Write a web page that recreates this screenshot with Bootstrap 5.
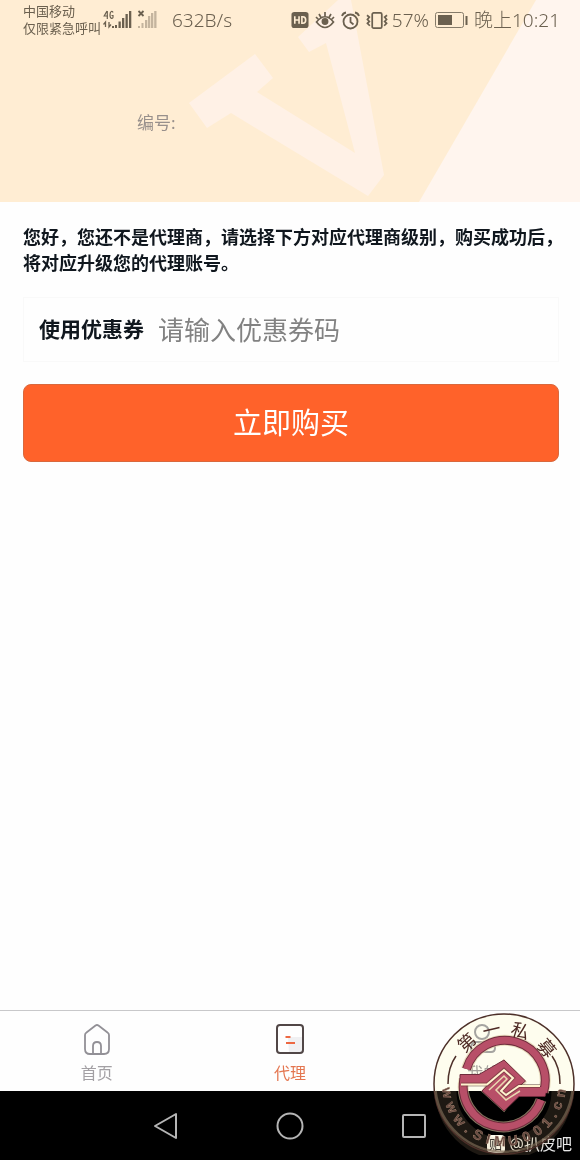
<!DOCTYPE html>
<html lang="zh-CN">
<head>
<meta charset="utf-8">
<meta name="viewport" content="width=device-width, initial-scale=1">
<title>代理</title>
<link href="https://cdn.jsdelivr.net/npm/bootstrap@5.3.0/dist/css/bootstrap.min.css" rel="stylesheet">
<style>
body{font-family:"Noto Sans","Noto Sans CJK SC",sans-serif;background:#fefefe;color:#10171e}
.hero{background:#ffedd3;height:202px}
.hero-art{z-index:0;inset:0;width:100%;height:100%}
.statusbar{height:40px;padding:0 20px 0 23px;color:#6b604f;font-size:19px;font-weight:300;line-height:24px}
.carrier{font-size:13px;line-height:17px;font-weight:400;width:80px}
.speed{margin-left:15px}
.icons{gap:6px}
.icons svg,.signal{flex:none}
.serial{margin:70px 0 0 137px;font-size:17px;line-height:26px;color:#98908c}
.page-main{padding:22px 21px 0 23px}
.notice{font-size:18px;line-height:26px;font-weight:700;margin:0 -12px 21px 0}
.coupon{height:65px;border:1px solid #f9f9f9;padding:0 15px}
.coupon label{font-size:21px;font-weight:700}
.coupon input{font-size:26px;line-height:36px;padding:0;margin-left:14px;min-width:0}
.coupon input::placeholder{color:#828282;opacity:1}
.buy{margin-top:22px;height:78px;background:#ff622a;border:1px solid #d9683d;border-radius:8px;color:#fff;font-size:29px}
.tabs{border-top:1px solid #c8c8ca;height:81px;background:#fefefe}
.tabs a{color:#a3a0a4;font-size:16px;line-height:22px;padding-top:12px;gap:7px}
.tabs a.active{color:#e47650}
.sysbar{height:69px;background:#000;padding:0 153px}
.sysbar button{line-height:0}
.source{right:8px;bottom:4px;color:#e8e8e8;font-size:16px;line-height:24px;gap:5px}
.tieba{width:18px;height:18px;border-radius:4px;background:#fff;color:#222;font-size:13px;line-height:18px}
.seal{right:5px;bottom:5px;pointer-events:none}
.seal .cream{mix-blend-mode:multiply}
.seal text{text-anchor:middle}
</style>
</head>
<body>
<div class="min-vh-100 d-flex flex-column position-relative">
<header class="hero position-relative">
  <svg class="hero-art position-absolute" viewBox="0 0 580 202" preserveAspectRatio="none" aria-hidden="true">
    <path d="M536 0H580V202H419Z" fill="#fff5ee"/>
    <path d="M189 103 255 54 273 78 257 92 355 153 326 43 309 52 298 37 338 0H351L384 175 368 196 231 113 207 128Z" fill="#fff1e6"/>
  </svg>
  <div class="statusbar d-flex align-items-center position-relative">
    <div class="carrier text-nowrap">中国移动<br>仅限紧急呼叫</div>
    <svg class="signal" width="54" height="22" viewBox="0 0 54 22" fill="#6b604f" aria-hidden="true">
      <path d="M4 2 1.200 7H5M4.300 2V10M10 3.500Q9.500 2 8.300 2.500 7 3 7 6T8.500 9.300 10 8V6.500H8.500" fill="none" stroke="#6b604f" stroke-width="1.200"/>
      <path d="M2.500 18V13L.5 15.500M6 13v5l2-2.500" fill="none" stroke="#6b604f" stroke-width="1.300"/>
      <path d="M9 17h2v2H9zM12 16h2v3h-2zM15.500 12.500h2.300V19h-2.300zM19 9h2.300v10H19zM22.500 5h2.300v14h-2.300zM26 2h2.300v17H26z"/>
      <path d="m35.500 2 5 5m0-5-5 5" stroke="#6b604f" stroke-width="1.800"/>
      <path opacity=".4" d="M35 17h2v2h-2zM38.500 14h2v5h-2zM42 11h2.300v8H42zM45 7h2.300v12H45zM48 4h2.300v15H48zM51.200 2h2.300v17h-2.300z"/>
    </svg>
    <span class="speed">632B/s</span>
    <div class="icons d-flex align-items-center ms-auto">
      <svg width="18" height="18" viewBox="0 0 19 18" aria-hidden="true"><rect x=".5" y=".5" width="18" height="17" rx="3" fill="#6b604f"/><path d="M4 5v8M8.500 5v8M4 9h4.500M11.500 5.500v7h1q3 0 3-3.500t-3-3.500z" fill="none" stroke="#ffedd3" stroke-width="1.700"/></svg>
      <svg width="20" height="19" viewBox="0 0 20 19" fill="none" stroke="#6b604f" stroke-width="1.700" aria-hidden="true"><path d="M1.500 11Q10 .5 18.500 11 10 22 1.500 11ZM10 1v4.500M4 3l2 3.500M16 3l-2 3.500M1 6l2.500 2.500M19 6l-2.500 2.500"/><circle cx="10" cy="10.500" r="2.600" fill="#6b604f"/></svg>
      <svg width="19" height="19" viewBox="0 0 19 19" fill="none" stroke="#6b604f" stroke-width="1.800" aria-hidden="true"><circle cx="9.500" cy="10.500" r="7"/><path d="M9.500 6v5l3 2.500M1 5Q2 2 5 1.500M18 5Q17 2 14 1.500"/></svg>
      <div class="d-flex align-items-center gap-1"><svg width="22" height="19" viewBox="0 0 23 19" fill="none" stroke="#6b604f" stroke-width="1.800" aria-hidden="true"><rect x="6.500" y="1.500" width="10" height="16" rx="1.500"/><path d="m1 4 2.500 2L1.500 8.500l2 2-2 2L4 15M22 4l-2.500 2 2 2.500-2 2 2 2L19 15"/></svg><span>57%</span></div>
      <svg width="33" height="16" viewBox="0 0 33 16" aria-hidden="true"><rect x=".5" y=".5" width="28" height="15" rx="2" fill="none" stroke="#857b69"/><path d="M3 3h14v10H3zM30.500 4h2v9h-2z" fill="#6b604f"/></svg>
      <span>晚上10:21</span>
    </div>
  </div>
  <div class="serial position-relative">编号:</div>
</header>

<main class="page-main flex-grow-1">
  <p class="notice">您好，您还不是代理商，请选择下方对应代理商级别，购买成功后，将对应升级您的代理账号。</p>
  <form>
    <div class="coupon d-flex align-items-center">
      <label for="coupon" class="text-nowrap">使用优惠券</label>
      <input id="coupon" type="text" class="border-0 bg-transparent flex-grow-1" placeholder="请输入优惠券码">
    </div>
    <button type="button" class="buy w-100">立即购买</button>
  </form>
</main>

<nav class="tabs d-flex">
  <a href="#" class="flex-fill w-100 d-flex flex-column align-items-center text-decoration-none">
    <svg width="28" height="32" viewBox="0 0 28 32" fill="none" stroke="#929096" stroke-width="1.800" aria-hidden="true"><path d="M2 12Q2 10.500 3.500 9.500L12.500 2.500Q14 1.500 15.500 2.500L24.500 9.500Q26 10.500 26 12V26Q26 31 21 31H7Q2 31 2 26ZM10 31V23Q10 19 14 19T18 23V31"/></svg>首页</a>
  <a href="#" class="active flex-fill w-100 d-flex flex-column align-items-center text-decoration-none" aria-current="page">
    <svg width="28" height="32" viewBox="0 0 28 32" aria-hidden="true"><path d="M12 14h14v16H13z" fill="#f0f0f2"/><rect x="1" y="2" width="26" height="28" rx="3" fill="none" stroke="#514747" stroke-width="2"/><path d="M9.500 14h5M10 20h9" stroke="#ed6842" stroke-width="2"/></svg>代理</a>
  <a href="#" class="flex-fill w-100 d-flex flex-column align-items-center text-decoration-none">
    <svg width="28" height="32" viewBox="0 0 28 32" fill="none" stroke="#a5a5ab" stroke-width="2" aria-hidden="true"><circle cx="13" cy="9" r="7"/><path d="M5 19H22Q26 21 26 25 26 29 22 29H6Q2 29 2 25 2 21 5 19"/></svg>我的</a>
</nav>
<footer class="sysbar d-flex justify-content-between align-items-center">
  <button type="button" class="border-0 bg-transparent p-0" aria-label="返回"><svg width="26" height="28" viewBox="0 0 26 28"><path d="M23 2V26L2 14Z" fill="none" stroke="#b5b5b5" stroke-width="2" stroke-linejoin="round"/></svg></button>
  <button type="button" class="border-0 bg-transparent p-0" aria-label="主屏幕"><svg width="28" height="28" viewBox="0 0 28 28"><circle cx="14" cy="14" r="12.500" fill="none" stroke="#b5b5b5" stroke-width="2"/></svg></button>
  <button type="button" class="border-0 bg-transparent p-0" aria-label="最近任务"><svg width="26" height="26" viewBox="0 0 26 26"><rect x="2" y="2" width="22" height="22" rx="1" fill="none" stroke="#b5b5b5" stroke-width="2"/></svg></button>
</footer>

<div class="source position-absolute d-flex align-items-center"><span class="tieba text-center">贴</span><span>@扒皮吧</span></div>
<svg class="seal position-absolute" width="142" height="142" viewBox="0 0 142 142" aria-hidden="true">
  <circle class="cream" cx="71" cy="71" r="70" fill="#fffeef"/>
  <path d="M13 78A58 58 0 0 0 129 78" fill="none" stroke="#b89c78" stroke-width="21" opacity=".16"/>
  <circle cx="71" cy="71" r="70" fill="none" stroke="#4d3029" stroke-width="1.500"/>
  <path d="M2.500 78A69 69 0 0 0 139.500 78" fill="none" stroke="#796653" stroke-width="2.500" opacity=".7"/>
  <path d="M15 71Q15 54 23 43M127 71Q127 54 119 43" fill="none" stroke="#4d3029" stroke-width="1.500"/>
  <g fill="none" stroke="#dcc9a0" stroke-width="11" opacity=".6">
    <path d="M33.500 56A40 40 0 1 1 110.500 79M31 66A40 40 0 0 0 108 87"/>
    <path d="M71 48 92 69 71 97 50 78Z" stroke-width="3"/>
  </g>
  <g fill="none" stroke="#6f2c3c" stroke-width="9">
    <path d="M33.500 56A40 40 0 1 1 110.500 79M31 66A40 40 0 0 0 108 87"/>
  </g>
  <path d="M27 61.500H46L71 47 92.500 68 86 73.500H115L112 83.500H86L71 98 49 78 55 71.500H27Z" fill="#b84f68" stroke="#6f2c3c"/>
  <g fill="none" stroke="#b84f68" stroke-width="7">
    <path d="M33.500 56A40 40 0 1 1 110.500 79M31 66A40 40 0 0 0 108 87"/>
  </g>
  <path d="M28 71.500H54L71 57 80 65 68 78 73 82 86 73H107" fill="none" stroke="#4d3029" stroke-width="4" opacity=".45"/>
  <path d="M28 71.500H54L71 57 80 65 68 78 73 82 86 73H107" fill="none" stroke="#fff3cf" stroke-width="2"/>
  <path d="M56 77 71 63 74 66 63 77 73 87 87 78" fill="none" stroke="#ead9b0" stroke-width="1.500"/>
  <g fill="#4d2924" font-size="18">
    <text x="71" y="22" transform="rotate(-42 71 71)">第</text>
    <text x="71" y="22" transform="rotate(-13 71 71)">一</text>
    <text x="71" y="22" transform="rotate(17 71 71)">私</text>
    <text x="71" y="22" transform="rotate(50 71 71)">募</text>
  </g>
  <g fill="#674840" stroke="#a78872" stroke-width=".4" font-family="Liberation Sans, sans-serif" font-size="14" font-weight="700">
    <text x="71" y="133" transform="rotate(81 71 71)">w</text>
    <text x="71" y="133" transform="rotate(66 71 71)">w</text>
    <text x="71" y="133" transform="rotate(51 71 71)">w</text>
    <text x="71" y="133" transform="rotate(39 71 71)">.</text>
    <text x="71" y="133" transform="rotate(27 71 71)">S</text>
    <text x="71" y="133" transform="rotate(16 71 71)">I</text>
    <text x="71" y="133" transform="rotate(4 71 71)">M</text>
    <text x="71" y="133" transform="rotate(-9 71 71)">U</text>
    <text x="71" y="133" transform="rotate(-23 71 71)">0</text>
    <text x="71" y="133" transform="rotate(-36 71 71)">0</text>
    <text x="71" y="133" transform="rotate(-48 71 71)">1</text>
    <text x="71" y="133" transform="rotate(-58 71 71)">.</text>
    <text x="71" y="133" transform="rotate(-68 71 71)">c</text>
    <text x="71" y="133" transform="rotate(-81 71 71)">n</text>
  </g>
</svg>
</div>
<script src="https://cdn.jsdelivr.net/npm/bootstrap@5.3.0/dist/js/bootstrap.bundle.min.js"></script>
</body>
</html>
